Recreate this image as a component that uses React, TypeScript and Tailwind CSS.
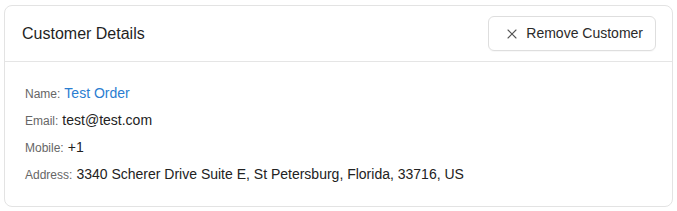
import { X } from "lucide-react";

export default function App() {
  const rows: { label: string; value: string; link?: boolean }[] = [
    { label: "Name", value: "Test Order", link: true },
    { label: "Email", value: "test@test.com" },
    { label: "Mobile", value: "+1" },
    { label: "Address", value: "3340 Scherer Drive Suite E, St Petersburg, Florida, 33716, US" },
  ];

  return (
    <div className="bg-white min-h-[211px] px-[4px] pt-[5px] font-['Liberation_Sans',Arial,sans-serif]">
      <div className="border border-[#e3e3e3] rounded-lg">
        <div className="flex items-center justify-between h-[56px] pl-[17px] pr-[16px] border-b border-[#e5e5e5]">
          <h2 className="text-[16px] text-[#1f1f1f]">Customer Details</h2>
          <button className="flex items-center gap-[6px] h-[35px] pl-[15px] pr-[12px] border border-[#dedede] rounded-md text-[14px] text-[#2a2a2a] shadow-[0_1px_1px_rgba(0,0,0,0.03)]">
            <X className="w-[16px] h-[16px] text-[#555]" strokeWidth={1.6} />
            Remove Customer
          </button>
        </div>
        <div className="flex flex-col gap-[10px] px-[20px] pt-[21px] pb-[25px]">
          {rows.map((r) => (
            <div key={r.label} className="flex items-baseline gap-[4px] h-[17px]">
              <span className="text-[12px] text-[#666]">{r.label}:</span>
              <span className={r.link ? "text-[14px] text-[#2a7dd1]" : "text-[14px] text-[#222]"}>{r.value}</span>
            </div>
          ))}
        </div>
      </div>
    </div>
  );
}
